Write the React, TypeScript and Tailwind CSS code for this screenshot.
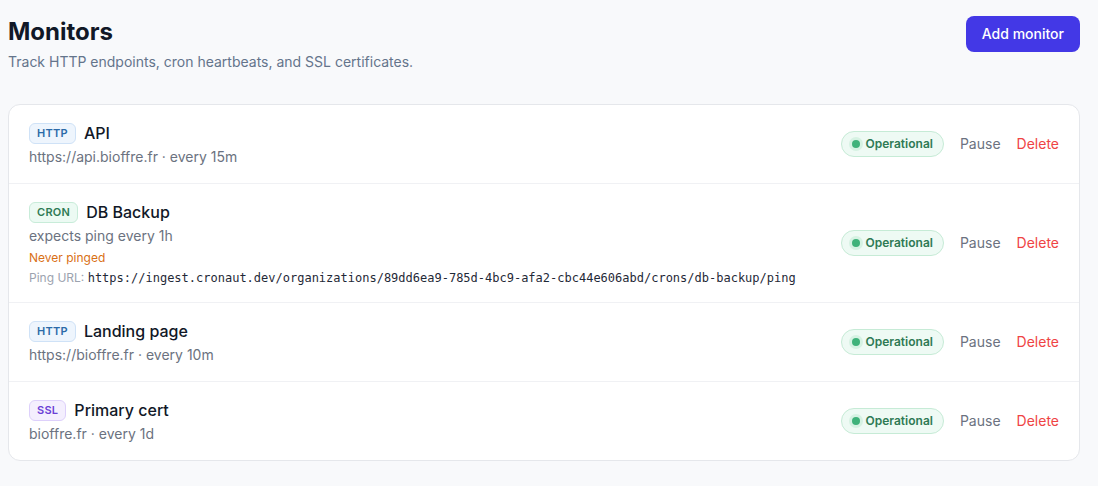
const monitors = [
  {
    type: "HTTP",
    name: "API",
    detail: "https://api.bioffre.fr · every 15m",
  },
  {
    type: "CRON",
    name: "DB Backup",
    detail: "expects ping every 1h",
    warning: "Never pinged",
    pingUrl:
      "https://ingest.cronaut.dev/organizations/89dd6ea9-785d-4bc9-afa2-cbc44e606abd/crons/db-backup/ping",
  },
  {
    type: "HTTP",
    name: "Landing page",
    detail: "https://bioffre.fr · every 10m",
  },
  {
    type: "SSL",
    name: "Primary cert",
    detail: "bioffre.fr · every 1d",
  },
]

const badgeStyles: Record<string, string> = {
  HTTP: "bg-[#eef5fd] border-[#cfe2f7] text-[#2c6aa8]",
  CRON: "bg-[#ecfaf3] border-[#c8ecd9] text-[#2f7a55]",
  SSL: "bg-[#f4effe] border-[#ddd0fb] text-[#6b3fd6]",
}

function TypeBadge({ type }: { type: string }) {
  return (
    <span
      className={`inline-flex items-center rounded-md border px-[7px] py-0.5 text-[11px] leading-[15px] font-semibold tracking-wide ${badgeStyles[type]}`}
    >
      {type}
    </span>
  )
}

function StatusPill() {
  return (
    <span className="inline-flex items-center gap-1.5 rounded-full border border-[#c6ebd6] bg-[#eefaf4] px-2.5 py-1 text-xs font-semibold text-[#2f7a55]">
      <span className="h-2 w-2 rounded-full bg-[#3fb27a] ring-[3px] ring-[#d6f2e3]" />
      Operational
    </span>
  )
}

export default function App() {
  return (
    <div
      className="min-h-[486px] bg-[#f8f9fb] pl-2 pr-[18px] pt-4 text-gray-900"
      style={{ fontFamily: "Inter, 'Noto Sans', sans-serif" }}
    >
      <div className="mb-8 flex items-start justify-between">
        <div>
          <h1 className="text-2xl leading-8 font-bold text-[#111827]">Monitors</h1>
          <p className="mt-1 text-sm text-[#64748b]">
            Track HTTP endpoints, cron heartbeats, and SSL certificates.
          </p>
        </div>
        <button className="rounded-lg bg-[#4338e6] px-4 py-2 text-sm font-medium text-white">
          Add monitor
        </button>
      </div>

      <div className="divide-y divide-[#f0f1f4] rounded-xl border border-[#e5e7eb] bg-white">
        {monitors.map((m) => (
          <div key={m.name} className="flex items-center justify-between px-5 py-4">
            <div>
              <div className="flex h-6 items-center gap-2">
                <TypeBadge type={m.type} />
                <span className="text-base font-medium text-[#111827]">{m.name}</span>
              </div>
              <div className="mt-0.5 text-sm text-[#6b7280]">{m.detail}</div>
              {m.warning && (
                <div className="mt-1 text-xs leading-4 text-[#d97016]">{m.warning}</div>
              )}
              {m.pingUrl && (
                <div className="mt-1 text-xs leading-4">
                  <span className="text-[#9ca3af]">Ping URL: </span>
                  <code
                    className="text-[#1f2937]"
                    style={{ fontFamily: "'DejaVu Sans Mono', monospace" }}
                  >
                    {m.pingUrl}
                  </code>
                </div>
              )}
            </div>
            <div className="flex items-center gap-4">
              <StatusPill />
              <button className="text-sm text-[#6b7280]">Pause</button>
              <button className="text-sm text-[#ef4444]">Delete</button>
            </div>
          </div>
        ))}
      </div>
    </div>
  )
}
